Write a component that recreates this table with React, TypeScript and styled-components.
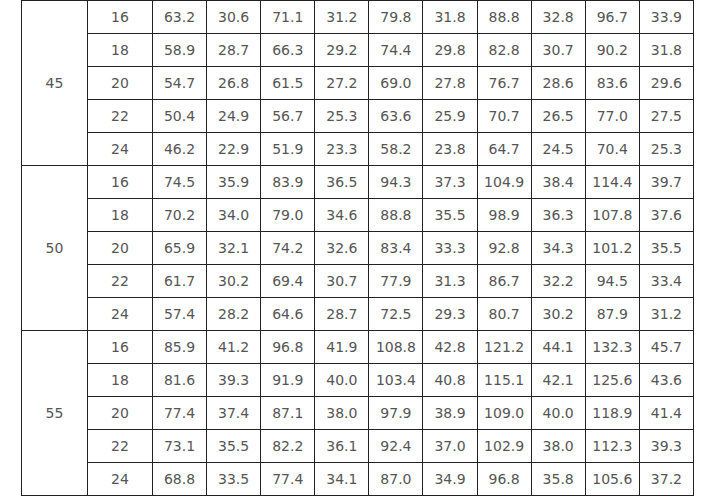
import React from 'react';
import styled, { createGlobalStyle } from 'styled-components';

const GlobalStyle = createGlobalStyle`
    html, body {
        margin: 0;
        padding: 0;
        background: #ffffff;
    }
`;

const Table = styled.table`
    margin-left: 21px;
    width: 673px;
    border-collapse: collapse;
    table-layout: fixed;
    font-family: "DejaVu Sans", Verdana, sans-serif;
    font-size: 14px;
    color: #555;
`;

const Cell = styled.td`
    border: 1px solid #222;
    height: 32px;
    padding: 0;
    text-align: center;
    vertical-align: middle;
`;

const GroupCell = styled(Cell)`
    color: #555;
`;

type Group = {
    speed: number;
    rows: { size: number; values: string[] }[];
};

const data: Group[] = [
    {
        speed: 45,
        rows: [
            { size: 16, values: ['63.2', '30.6', '71.1', '31.2', '79.8', '31.8', '88.8', '32.8', '96.7', '33.9'] },
            { size: 18, values: ['58.9', '28.7', '66.3', '29.2', '74.4', '29.8', '82.8', '30.7', '90.2', '31.8'] },
            { size: 20, values: ['54.7', '26.8', '61.5', '27.2', '69.0', '27.8', '76.7', '28.6', '83.6', '29.6'] },
            { size: 22, values: ['50.4', '24.9', '56.7', '25.3', '63.6', '25.9', '70.7', '26.5', '77.0', '27.5'] },
            { size: 24, values: ['46.2', '22.9', '51.9', '23.3', '58.2', '23.8', '64.7', '24.5', '70.4', '25.3'] },
        ],
    },
    {
        speed: 50,
        rows: [
            { size: 16, values: ['74.5', '35.9', '83.9', '36.5', '94.3', '37.3', '104.9', '38.4', '114.4', '39.7'] },
            { size: 18, values: ['70.2', '34.0', '79.0', '34.6', '88.8', '35.5', '98.9', '36.3', '107.8', '37.6'] },
            { size: 20, values: ['65.9', '32.1', '74.2', '32.6', '83.4', '33.3', '92.8', '34.3', '101.2', '35.5'] },
            { size: 22, values: ['61.7', '30.2', '69.4', '30.7', '77.9', '31.3', '86.7', '32.2', '94.5', '33.4'] },
            { size: 24, values: ['57.4', '28.2', '64.6', '28.7', '72.5', '29.3', '80.7', '30.2', '87.9', '31.2'] },
        ],
    },
    {
        speed: 55,
        rows: [
            { size: 16, values: ['85.9', '41.2', '96.8', '41.9', '108.8', '42.8', '121.2', '44.1', '132.3', '45.7'] },
            { size: 18, values: ['81.6', '39.3', '91.9', '40.0', '103.4', '40.8', '115.1', '42.1', '125.6', '43.6'] },
            { size: 20, values: ['77.4', '37.4', '87.1', '38.0', '97.9', '38.9', '109.0', '40.0', '118.9', '41.4'] },
            { size: 22, values: ['73.1', '35.5', '82.2', '36.1', '92.4', '37.0', '102.9', '38.0', '112.3', '39.3'] },
            { size: 24, values: ['68.8', '33.5', '77.4', '34.1', '87.0', '34.9', '96.8', '35.8', '105.6', '37.2'] },
        ],
    },
];

export default function App() {
    return (
        <>
            <GlobalStyle />
            <Table>
                <colgroup>
                    <col style={{ width: 66 }} />
                    <col style={{ width: 65 }} />
                    {Array.from({ length: 10 }).map((_, i) => (
                        <col key={i} />
                    ))}
                </colgroup>
                <tbody>
                    {data.map((group) =>
                        group.rows.map((row, i) => (
                            <tr key={`${group.speed}-${row.size}`}>
                                {i === 0 && (
                                    <GroupCell rowSpan={group.rows.length}>{group.speed}</GroupCell>
                                )}
                                <Cell>{row.size}</Cell>
                                {row.values.map((v, j) => (
                                    <Cell key={j}>{v}</Cell>
                                ))}
                            </tr>
                        ))
                    )}
                </tbody>
            </Table>
        </>
    );
}
